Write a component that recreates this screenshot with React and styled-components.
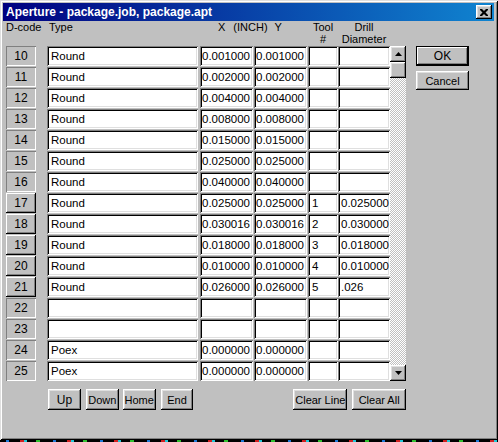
import React from "react";
import styled, { createGlobalStyle } from "styled-components";

const GlobalStyle = createGlobalStyle`
  html, body {
    margin: 0;
    padding: 0;
    background: #000;
  }
  body {
    font-family: "Liberation Sans", Arial, sans-serif;
    font-size: 11px;
    color: #000;
  }
`;

const raised = `
  box-shadow: inset -1px -1px #000, inset 1px 1px #fff,
    inset -2px -2px #808080, inset 2px 2px #dfdfdf;
`;

const Window = styled.div`
  width: 498px;
  height: 440px;
  box-sizing: border-box;
  padding: 3px 4px 3px 3px;
  background: #c0c0c0;
  box-shadow: inset 1px 1px #dfdfdf, inset -1px -1px #000,
    inset 2px 2px #fff, inset -2px -2px #808080;
  display: flex;
  flex-direction: column;
`;

const TitleBar = styled.div`
  height: 18px;
  display: flex;
  align-items: center;
  padding: 0 2px 0 3px;
  background: linear-gradient(90deg, #000080, #1084d0);
  color: #fff;
  font-weight: bold;
  font-size: 12px;
  line-height: 18px;
`;

const CloseButton = styled.div`
  margin-left: auto;
  width: 16px;
  height: 14px;
  background: #c0c0c0;
  display: flex;
  align-items: center;
  justify-content: center;
  ${raised}
`;

const Body = styled.div`
  display: flex;
  padding-left: 3px;
`;

const LeftPane = styled.div`
  width: 400px;
  display: flex;
  flex-direction: column;
`;

const Header = styled.div`
  height: 25px;
  display: flex;
  line-height: 12px;
`;

const HeadCell = styled.div`
  width: ${(p) => p.$w}px;
  padding-left: ${(p) => p.$pad || 0}px;
  box-sizing: border-box;
  text-align: ${(p) => (p.$center ? "center" : "left")};
  display: flex;
  flex-direction: column;
  align-items: ${(p) => (p.$center ? "center" : "flex-start")};
`;

const AxisHead = styled.div`
  display: flex;
  padding-left: 18px;
  span + span {
    margin-left: 8px;
  }
  span:last-child {
    margin-left: 7px;
  }
`;

const Table = styled.div`
  display: flex;
`;

const Rows = styled.div`
  display: flex;
  flex-direction: column;
  gap: 1px;
`;

const Row = styled.div`
  height: 20px;
  display: flex;
`;

const Code = styled.div`
  width: 30px;
  height: 20px;
  box-sizing: border-box;
  display: flex;
  align-items: center;
  justify-content: center;
  font-size: 12px;
  line-height: 20px;
  box-shadow: ${(p) =>
    p.$active
      ? "inset -1px -1px #000, inset 1px 1px #fff, inset -2px -2px #808080"
      : "inset 1px 1px #808080, inset -1px -1px #fff"};
`;

const Field = styled.div`
  width: ${(p) => p.$w}px;
  margin-left: ${(p) => p.$gap}px;
  height: 20px;
  box-sizing: border-box;
  padding-left: ${(p) => p.$pad}px;
  background: #fff;
  font-size: 11.5px;
  line-height: 20px;
  white-space: nowrap;
  overflow: hidden;
  box-shadow: inset 1px 1px #808080, inset -1px -1px #fff,
    inset 2px 2px #000, inset -2px -2px #dfdfdf;
`;

const ScrollBar = styled.div`
  width: 16px;
  height: 335px;
  display: flex;
  flex-direction: column;
  background: repeating-conic-gradient(#c0c0c0 0 25%, #fff 0 50%) 0 0 / 2px
    2px;
`;

const ScrollPart = styled.div`
  width: 16px;
  height: 16px;
  flex-shrink: 0;
  background: #c0c0c0;
  display: flex;
  align-items: center;
  justify-content: center;
  margin-top: ${(p) => (p.$bottom ? "auto" : "0")};
  ${raised}
`;

const ButtonBar = styled.div`
  display: flex;
  margin-top: 8px;
  padding-left: 42px;
`;

const Button = styled.div`
  width: ${(p) => p.$w}px;
  height: ${(p) => p.$h || 21}px;
  margin-left: ${(p) => p.$gap || 0}px;
  box-sizing: border-box;
  background: #c0c0c0;
  display: flex;
  align-items: center;
  justify-content: center;
  font-size: ${(p) => p.$fs || 11}px;
  white-space: nowrap;
  ${raised}
`;

const DefaultButton = styled(Button)`
  border: 1px solid #000;
  box-shadow: inset -1px -1px #000, inset 1px 1px #fff,
    inset -2px -2px #808080;
`;

const RightPane = styled.div`
  margin-left: 10px;
  padding-top: 25px;
  display: flex;
  flex-direction: column;
  gap: 5px;
`;

const TaskStrip = styled.div`
  height: 2px;
  background: repeating-linear-gradient(
    90deg,
    #000 0 6px,
    #1e7ad8 6px 9px,
    #000 9px 20px,
    #d02020 20px 24px,
    #22c8d8 24px 27px,
    #000 27px 36px,
    #30c030 36px 40px,
    #000 40px 47px
  );
`;

const rows = [
  { d: 10, t: "Round", x: "0.001000" },
  { d: 11, t: "Round", x: "0.002000" },
  { d: 12, t: "Round", x: "0.004000" },
  { d: 13, t: "Round", x: "0.008000" },
  { d: 14, t: "Round", x: "0.015000" },
  { d: 15, t: "Round", x: "0.025000" },
  { d: 16, t: "Round", x: "0.040000" },
  { d: 17, t: "Round", x: "0.025000", tool: "1", drill: "0.025000" },
  { d: 18, t: "Round", x: "0.030016", tool: "2", drill: "0.030000" },
  { d: 19, t: "Round", x: "0.018000", tool: "3", drill: "0.018000" },
  { d: 20, t: "Round", x: "0.010000", tool: "4", drill: "0.010000" },
  { d: 21, t: "Round", x: "0.026000", tool: "5", drill: ".026" },
  { d: 22, t: "", x: "" },
  { d: 23, t: "", x: "" },
  { d: 24, t: "Poex", x: "0.000000" },
  { d: 25, t: "Poex", x: "0.000000" },
];

const Arrow = ({ down }) => (
  <svg width="7" height="4" viewBox="0 0 7 4">
    <path d={down ? "M0 0H7L3.5 4Z" : "M3.5 0L7 4H0Z"} fill="#000" />
  </svg>
);

export default function App() {
  return (
    <>
      <GlobalStyle />
      <Window>
        <TitleBar>
          Aperture - package.job, package.apt
          <CloseButton>
            <svg width="8" height="7" viewBox="0 0 8 7">
              <path
                d="M0 0h2l2 2 2-2h2v1L5.5 3.5 8 6v1H6L4 5 2 7H0V6l2.5-2.5L0 1z"
                fill="#000"
              />
            </svg>
          </CloseButton>
        </TitleBar>
        <Body>
          <LeftPane>
            <Header>
              <HeadCell $w={41}>D-code</HeadCell>
              <HeadCell $w={153} $pad={2}>
                Type
              </HeadCell>
              <HeadCell $w={108}>
                <AxisHead>
                  <span>X</span>
                  <span>(INCH)</span>
                  <span>Y</span>
                </AxisHead>
              </HeadCell>
              <HeadCell $w={30} $center>
                <span>Tool</span>
                <span>#</span>
              </HeadCell>
              <HeadCell $w={52} $center>
                <span>Drill</span>
                <span>Diameter</span>
              </HeadCell>
            </Header>
            <Table>
              <Rows>
                {rows.map((r) => (
                  <Row key={r.d}>
                    <Code $active={!!r.tool}>{r.d}</Code>
                    <Field $w={151} $gap={11} $pad={4}>
                      {r.t}
                    </Field>
                    <Field $w={53} $gap={2} $pad={2}>
                      {r.x}
                    </Field>
                    <Field $w={53} $gap={1} $pad={2}>
                      {r.x}
                    </Field>
                    <Field $w={30} $gap={1} $pad={4}>
                      {r.tool}
                    </Field>
                    <Field $w={52} $gap={0} $pad={3}>
                      {r.drill}
                    </Field>
                  </Row>
                ))}
              </Rows>
              <ScrollBar>
                <ScrollPart>
                  <Arrow />
                </ScrollPart>
                <ScrollPart />
                <ScrollPart $bottom>
                  <Arrow down />
                </ScrollPart>
              </ScrollBar>
            </Table>
            <ButtonBar>
              <Button $w={33} $fs={12}>Up</Button>
              <Button $w={33} $gap={5}>Down</Button>
              <Button $w={33} $gap={4}>Home</Button>
              <Button $w={33} $gap={5}>End</Button>
              <Button $w={54} $gap={100}>Clear Line</Button>
              <Button $w={54} $gap={5}>Clear All</Button>
            </ButtonBar>
          </LeftPane>
          <RightPane>
            <DefaultButton $w={53} $h={20} $fs={12}>
              OK
            </DefaultButton>
            <Button $w={53} $h={19}>
              Cancel
            </Button>
          </RightPane>
        </Body>
      </Window>
      <TaskStrip />
    </>
  );
}
